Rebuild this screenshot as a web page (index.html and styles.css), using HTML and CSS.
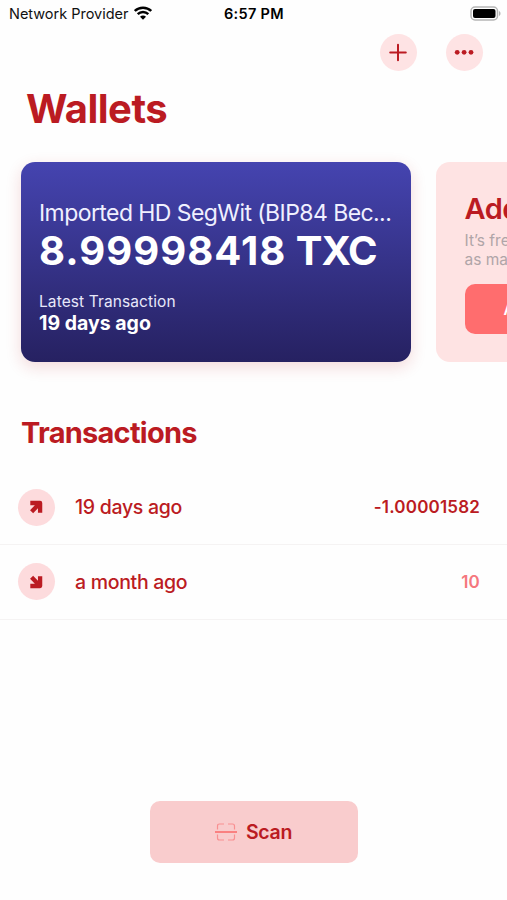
FILE: index.html
```html
<!DOCTYPE html>
<html lang="en">
<head>
<meta charset="utf-8">
<title>Wallets</title>
<link rel="stylesheet" href="styles.css">
</head>
<body>
<div class="screen">
  <header class="status">
    <div class="carrier"><span class="network">Network Provider</span>
      <svg class="wifi" width="18" height="14" viewBox="0 0 18 14"><path d="M.8 5C5.2.6 12.800.6 17.200 5M3.700 8.100c2.900-2.900 7.700-2.900 10.600 0" fill="none" stroke="#000" stroke-width="2.400"/><path d="M6 10.700c1.600-1.500 4.400-1.500 6 0L9 13.700z"/></svg>
    </div>
    <span class="time">6:57 PM</span>
    <svg class="battery" width="31" height="15" viewBox="0 0 31 15"><rect x="1" y="1" width="26.5" height="13" rx="4" fill="#fff" stroke="#b5b5b5" stroke-width="1.5"/><rect x="3" y="3" width="22.5" height="9" rx="2"/><path d="M29 5c2 .7 2 4.300 0 5z" fill="#b5b5b5"/></svg>
  </header>
  <nav class="actions">
    <button class="round" aria-label="Add"><svg width="37" height="37" viewBox="0 0 37 37"><path d="M18 10.700v15.600M10.200 18.500h15.600" stroke="#bb1b22" stroke-width="2" stroke-linecap="round"/></svg></button>
    <button class="round" aria-label="More"><svg width="37" height="37" viewBox="0 0 37 37" fill="#bb1b22"><circle cx="11.200" cy="18.300" r="2.400"/><circle cx="18.100" cy="18.300" r="2.400"/><circle cx="25" cy="18.300" r="2.400"/></svg></button>
  </nav>
  <h1 class="title">Wallets</h1>
  <section class="carousel">
    <article class="card">
      <div class="name">Imported HD SegWit (BIP84 Bec...</div>
      <div class="balance">8.99998418 <span class="unit">TXC</span></div>
      <div class="latest">Latest Transaction</div>
      <div class="when">19 days ago</div>
    </article>
    <article class="add-card">
      <h2 class="add-title">Add a wallet</h2>
      <p class="add-copy">It’s free and you can create<br>as many as you like.</p>
      <button class="add-button">Add now</button>
    </article>
  </section>
  <h2 class="subtitle">Transactions</h2>
  <ul class="list">
    <li class="row">
      <span class="badge"><svg width="37" height="37" viewBox="0 0 37 37"><path d="M12.300 14h9.800v9.800M21.300 14.800l-7.700 7.900" fill="none" stroke="#bb1b22" stroke-width="4.300" stroke-linejoin="round"/></svg></span>
      <span class="label">19 days ago</span><span class="amount out">-1.00001582</span>
    </li>
    <li class="row">
      <span class="badge"><svg width="37" height="37" viewBox="0 0 37 37"><path d="M12.300 23h9.800v-9.800M21.300 22.200l-7.700-7.900" fill="none" stroke="#bb1b22" stroke-width="4.300" stroke-linejoin="round"/></svg></span>
      <span class="label">a month ago</span><span class="amount in">10</span>
    </li>
  </ul>
  <button class="scan">
    <svg width="22" height="18" viewBox="0 0 22 18" fill="none"><path d="M2.500 6.500V3q0-2 2-2H9M13 1h4.500q2 0 2 2v3.500M2.500 11.500V15q0 2 2 2H9M13 17h4.500q2 0 2-2v-3.500" stroke="#f98f91" stroke-width="1.200"/><path d="M0 9h22" stroke="#fb6061" stroke-width="1.400"/></svg>
    <span>Scan</span>
  </button>
</div>
</body>
</html>
```
FILE: styles.css
```css
* { box-sizing: border-box; }
body, h1, h2, p, ul { margin: 0; padding: 0; }
body { background: #fefefe; font-family: Inter, "Liberation Sans", sans-serif; color: #bb1b22; }
button { border: 0; padding: 0; font-family: inherit; }
svg { display: block; flex: none; }
.screen { width: 507px; height: 900px; overflow: hidden; display: flex; flex-direction: column; }
.status { height: 28px; padding: 0 6px 0 9px; display: grid; grid-template-columns: 215px 1fr auto; align-items: center; color: #111; font-size: 14.5px; line-height: 28px; white-space: nowrap; }
.carrier { display: flex; align-items: center; gap: 6px; }
.network { letter-spacing: -0.02px; }
.wifi { margin-top: -2px; }
.time { font-weight: 600; letter-spacing: 0.3px; color: #000; }
.battery { margin-top: -2px; }
.actions { display: flex; justify-content: flex-end; gap: 29px; padding: 6px 24.5px 0 0; }
.round { width: 37px; height: 37px; border-radius: 50%; background: #fee3e4; }
.title { margin: 14px 0 0 26px; font-size: 40px; line-height: 48px; font-weight: 700; letter-spacing: -0.5px; }
.carousel { display: flex; gap: 25px; margin-top: 29.300px; padding-left: 20.500px; }
.card { flex: none; width: 390px; height: 200px; border-radius: 14px; padding: 35.700px 10px 0 18.500px; background: linear-gradient(#4544b0, #262161); box-shadow: 0 5px 16px rgba(187, 27, 34, .16); color: #fff; white-space: nowrap; }
.name { font-size: 23px; line-height: 30px; color: #f0f0ff; letter-spacing: -0.57px; }
.balance { font-size: 40px; line-height: 46px; font-weight: 700; letter-spacing: 1.05px; }
.unit { margin-left: -1px; letter-spacing: -1px; }
.latest { margin-top: 18px; font-size: 15.500px; line-height: 20px; color: #e8e8fa; letter-spacing: 0.1px; }
.when { font-size: 19.500px; line-height: 23px; font-weight: 700; }
.add-card { flex: none; width: 390px; height: 200px; border-radius: 14px; padding: 29px 29px 0; background: #fee3e3; }
.add-title { font-size: 29px; line-height: 36px; font-weight: 600; letter-spacing: -0.5px; }
.add-copy { margin-top: 4px; font-size: 15.500px; line-height: 19px; color: #b0a5a8; }
.add-button { display: block; margin-top: 15px; width: 144px; height: 50px; border-radius: 10px; background: #ff6d6e; color: #fff; font-size: 15.500px; font-weight: 600; }
.subtitle { margin: 52.700px 0 0 21px; font-size: 29px; line-height: 36px; font-weight: 700; letter-spacing: -0.75px; }
.list { margin-top: 19.300px; list-style: none; }
.row { height: 74.700px; padding: 0 27px 0 18px; display: flex; align-items: center; border-bottom: 1px solid #f5f3f3; }
.badge { width: 37px; height: 37px; border-radius: 50%; background: #fddbdd; }
.label { margin-left: 20px; flex: 1; font-size: 19.500px; font-weight: 500; letter-spacing: -0.3px; }
.amount { font-size: 17px; font-weight: 600; letter-spacing: 0.18px; }
.in { color: #f5777d; }
.scan { align-self: center; margin-top: 181.800px; width: 208px; height: 62px; border-radius: 10px; background: #f9cccd; color: #bb1b22; display: flex; align-items: center; justify-content: center; gap: 9px; font-size: 19.500px; font-weight: 600; letter-spacing: -0.3px; }
```
